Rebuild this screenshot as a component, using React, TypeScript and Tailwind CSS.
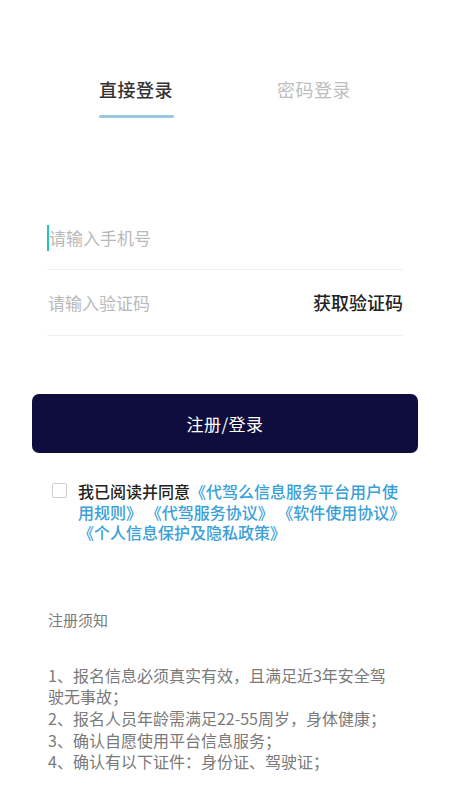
import { useState } from 'react';

const notices = [
  '1、报名信息必须真实有效，且满足近3年安全驾驶无事故；',
  '2、报名人员年龄需满足22-55周岁，身体健康；',
  '3、确认自愿使用平台信息服务；',
  '4、确认有以下证件：身份证、驾驶证；',
];

const docs = ['代驾么信息服务平台用户使用规则', '代驾服务协议', '软件使用协议', '个人信息保护及隐私政策'];

export default function App() {
  const [tab, setTab] = useState(0);
  const [agree, setAgree] = useState(false);

  return (
    <div className="min-h-[800px] w-[450px] bg-white font-['Noto_Sans_CJK_SC',sans-serif]">
      {/* 顶部切换 */}
      <div className="mx-[47px] flex pt-[74px]">
        {['直接登录', '密码登录'].map((t, i) => (
          <button
            key={t}
            onClick={() => setTab(i)}
            className="flex flex-1 flex-col items-center"
          >
            <span
              className={
                'text-[18px] leading-[30px] tracking-[0.5px] ' +
                (tab === i ? 'font-medium text-[#333333]' : 'text-[#bdbdbd]')
              }
            >
              {t}
            </span>
            <span
              className={
                'mt-[11px] h-[3px] w-[75px] rounded-full ' +
                (tab === i ? 'bg-[#9cc8de]' : 'bg-transparent')
              }
            />
          </button>
        ))}
      </div>

      {/* 输入区 */}
      <div className="mx-[47px] mt-[86px]">
        <div className="flex h-[66px] items-center border-b border-[#efefef] pt-[2px]">
          <span className="h-[26px] w-[2px] bg-[#22c6b6]" />
          <input
            className="flex-1 bg-transparent text-[17px] text-[#333] outline-none placeholder:text-[#b9b9b9]"
            placeholder="请输入手机号"
          />
        </div>
        <div className="flex h-[66px] items-center border-b border-[#efefef]">
          <input
            className="min-w-0 flex-1 bg-transparent pl-[1px] text-[17px] text-[#333] outline-none placeholder:text-[#b9b9b9]"
            placeholder="请输入验证码"
          />
          <span className="text-[18px] font-medium text-[#222]">获取验证码</span>
        </div>
      </div>

      {/* 登录按钮 */}
      <div className="mx-[32px] mt-[58px]">
        <button className="flex h-[59px] w-full items-center justify-center rounded-[7px] bg-[#0f0d3d] text-[17px] tracking-[0.5px] text-white">
          注册/登录
        </button>
      </div>

      {/* 协议 */}
      <div className="ml-[52px] mr-[38px] mt-[28px] flex">
        <button
          onClick={() => setAgree(!agree)}
          className={
            'mt-[2px] h-[15px] w-[15px] shrink-0 rounded-[2px] border ' +
            (agree ? 'border-[#0f0d3d] bg-[#0f0d3d]' : 'border-[#cfcfcf] bg-white')
          }
        />
        <p className="ml-[11px] text-[16px] leading-[20.5px] font-medium text-[#3aa0d8]">
          <span className="text-[#222]">我已阅读并同意</span>
          {docs.map((d, i) => (
            <span key={d}>
              《{d}》{i < docs.length - 1 ? ' ' : ''}
            </span>
          ))}
        </p>
      </div>

      {/* 注册须知 */}
      <div className="ml-[48px] mt-[66px] w-[352px] text-[#7a7a7a]">
        <p className="text-[15px] leading-[22px]">注册须知</p>
        <div className="mt-[34px] text-[16px] leading-[21.7px]">
          {notices.map((n) => (
            <p key={n}>{n}</p>
          ))}
        </div>
      </div>
    </div>
  );
}
